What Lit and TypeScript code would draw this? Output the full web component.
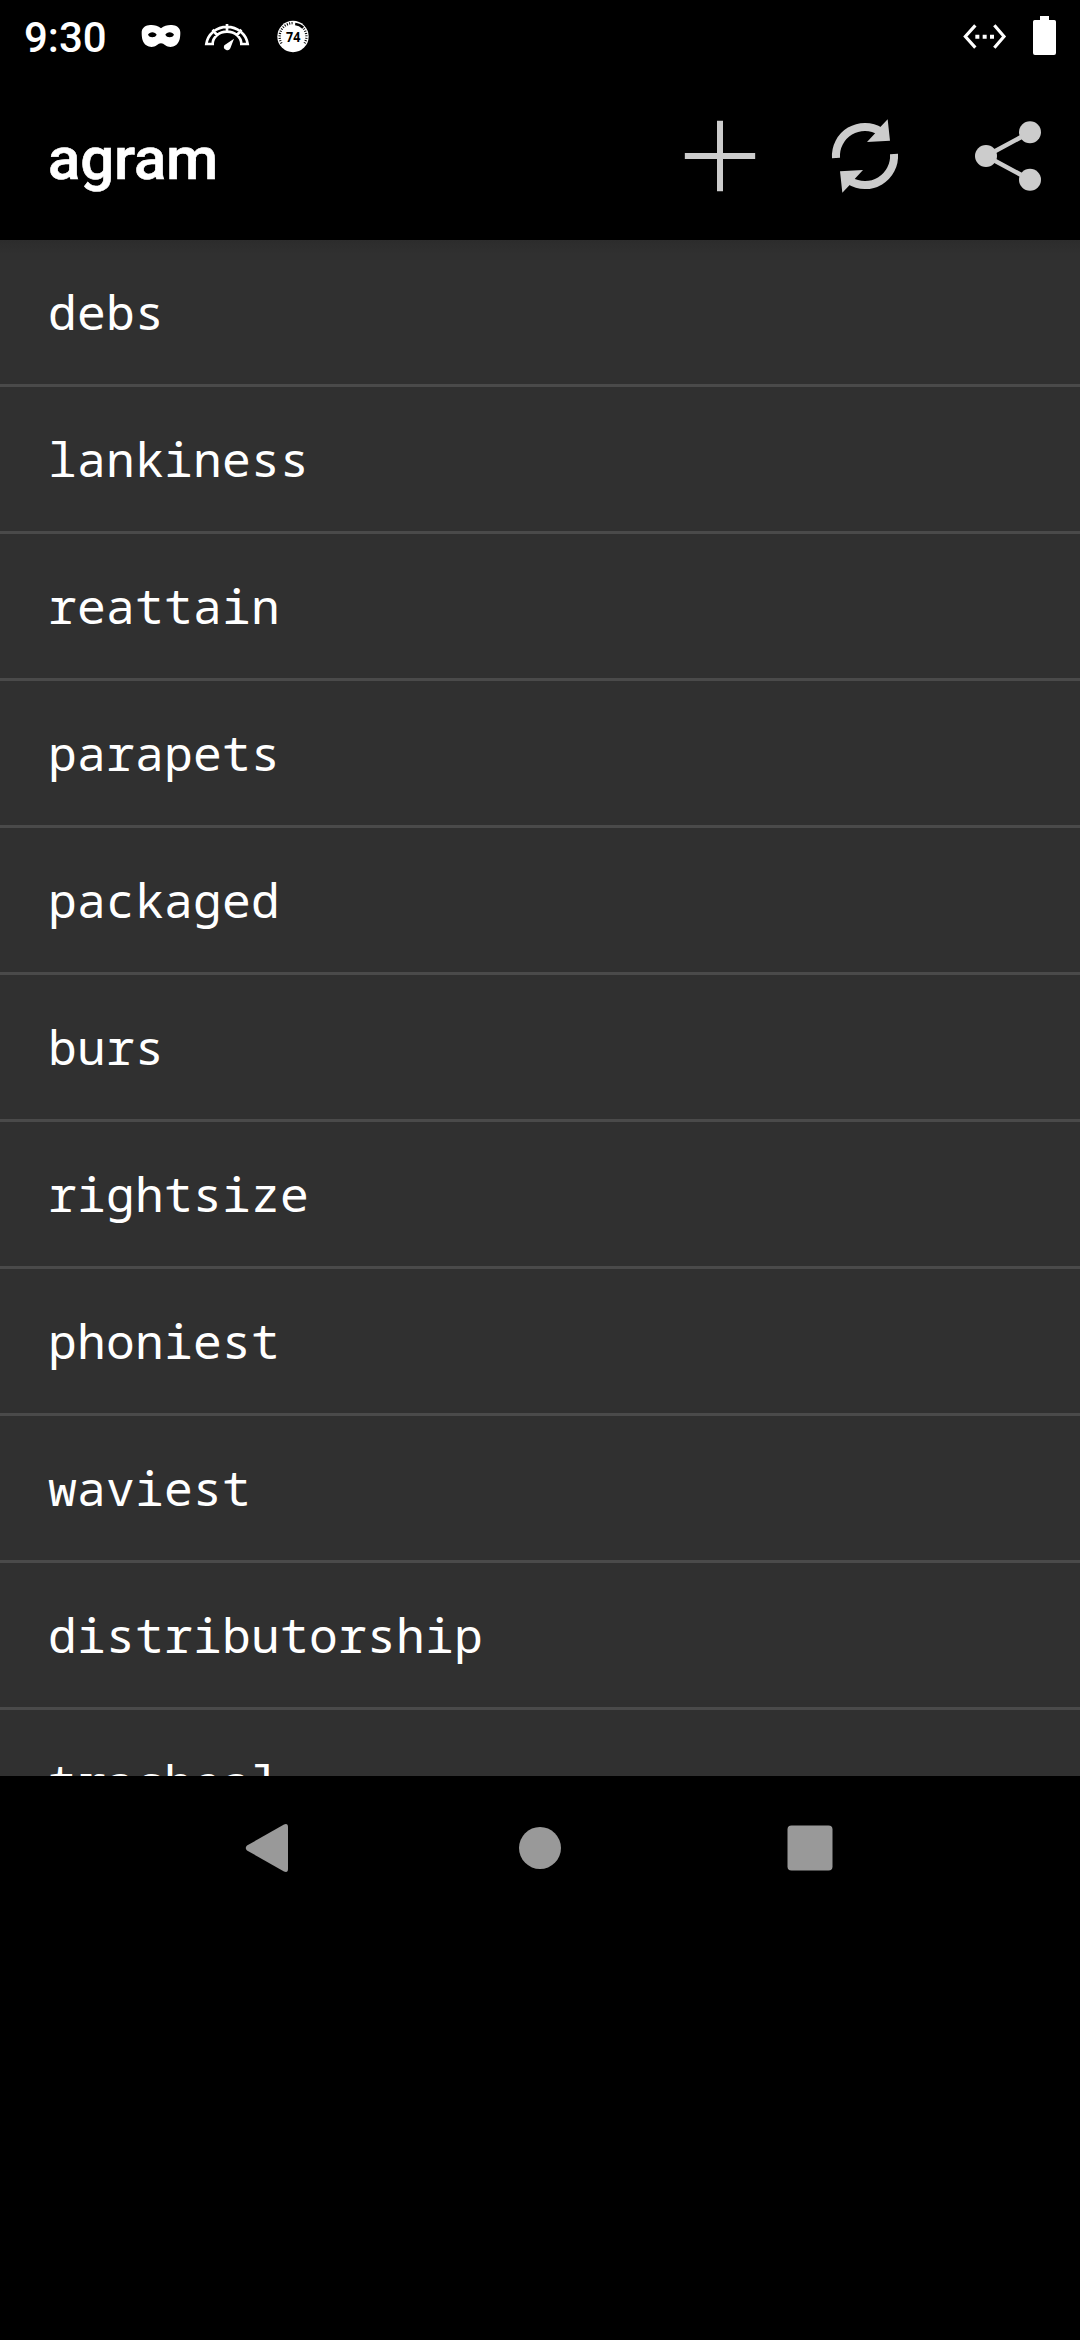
import { LitElement, html, css, svg } from "lit";
import { customElement } from "lit/decorators.js";

const WORDS = [
  "debs",
  "lankiness",
  "reattain",
  "parapets",
  "packaged",
  "burs",
  "rightsize",
  "phoniest",
  "waviest",
  "distributorship",
  "tracheal",
];

@customElement("status-bar")
export class StatusBar extends LitElement {
  static styles = css`
    :host {
      display: flex;
      align-items: center;
      height: 72px;
      box-sizing: border-box;
      padding: 0 18px 0 24px;
      background: #000;
      color: #fff;
      font-family: Roboto, sans-serif;
    }
    svg { display: block; height: 72px; flex: none; }
    .time { width: 113px; padding-top: 3px; font-size: 42px; font-weight: 500; line-height: 50px; }
    .notes { display: flex; gap: 18px; flex: 1; }
    .note { width: 48px; }
    .system { display: flex; gap: 15px; }
    .ethernet { width: 54px; }
    .battery { width: 36px; }
    .count { font: 700 42px "Open Sans", sans-serif; }
  `;
  render() {
    return html`
      <span class="time">9:30</span>
      <div class="notes">
        <svg class="note" viewBox="411 0 144 216">
          <path fill="#fff" fill-rule="evenodd" d="M483 85C494 76 508 74 520 76C533 78 541 86 541 98C541 117 537 129 527 136C517 143 504 142 496 136C491 132 488 130 483 130C478 130 475 132 470 136C462 142 449 143 439 136C429 129 425 117 425 98C425 86 433 78 446 76C458 74 472 76 483 85ZM444 104C448 94 466 94 470 104C466 114 448 114 444 104ZM496 104C500 94 518 94 522 104C518 114 500 114 496 104Z"/>
        </svg>
        <svg class="note" viewBox="609 0 144 216">
          <path fill="none" stroke="#fff" stroke-width="8" d="M619 132A62.500 59 0 0 1 743 132H724A43 37 0 0 0 638 132ZM681 72V96M638 89L652 107M724 89L710 107"/>
          <path fill="#fff" d="M702 116L691 145A10 10 0 1 1 673 136Z"/>
        </svg>
        <svg class="note" viewBox="808.5 0 144 216">
          <circle cx="880.5" cy="109.5" r="47" fill="#fff"/>
          <path fill="none" stroke="#000" stroke-width="7" stroke-dasharray="3 4.2" d="M846 130A40 40 0 0 1 880 69.500M913 86A40 40 0 0 1 915 130"/>
          <path fill="none" stroke="#000" stroke-width="8" d="M887 72A40 40 0 0 1 911 83"/>
          <text class="count" x="881" y="125" text-anchor="middle" textLength="43" lengthAdjust="spacingAndGlyphs">74</text>
        </svg>
      </div>
      <div class="system">
        <svg class="ethernet" viewBox="51 0 162 216">
          <path fill="none" stroke="#fff" stroke-width="9.500" d="M106 76L76 109.500L106 143M163 76L192 109.500L163 143"/>
          <path fill="#fff" d="M106 104h12v12h-12zM128 104h12v12h-12zM150 104h12v12h-12z"/>
        </svg>
        <svg class="battery" viewBox="258 0 108 216">
          <path fill="#fff" d="M300 48H327V60H343Q348 60 348 65V159Q348 165 342 165H285Q279 165 279 159V65Q279 60 284 60H300Z"/>
        </svg>
      </div>
    `;
  }
}

@customElement("action-bar")
export class ActionBar extends LitElement {
  static styles = css`
    :host {
      display: flex;
      align-items: center;
      height: 168px;
      background: #000;
      color: #fff;
    }
    .title {
      flex: 1;
      margin: 0;
      padding: 5px 0 0 48px;
      font: 500 60px/70px Roboto, sans-serif;
      letter-spacing: -0.2px;
      -webkit-text-stroke: 0.6px #fff;
    }
    svg { display: block; width: 144px; height: 144px; }
  `;
  render() {
    return html`
      <h1 class="title">agram</h1>
      <svg viewBox="-36 -48 432 432">
        <path fill="#ccc" d="M171 62.500H189V159H285.500V177H189V273.500H171V177H74.500V159H171Z"/>
      </svg>
      <svg viewBox="396 -48 432 432">
        ${["", "rotate(180 615 168)"].map(
          (turn) => svg`<g transform=${turn}>
            <path fill="none" stroke="#ccc" stroke-width="24" d="M528 174A87 87 0 0 1 661 94"/>
            <path fill="#ccc" d="M683 58L690 122L621 126L644 101L661 81Z"/>
          </g>`,
        )}
      </svg>
      <svg viewBox="828 -48 432 432">
        <path fill="none" stroke="#ccc" stroke-width="13.500" d="M1110 97L978 168L1110 239"/>
        <g fill="#ccc">
          <circle cx="978" cy="168" r="33"/>
          <circle cx="1110" cy="97" r="33"/>
          <circle cx="1110" cy="239" r="33"/>
        </g>
      </svg>
    `;
  }
}

@customElement("nav-bar")
export class NavBar extends LitElement {
  static styles = css`
    :host {
      display: grid;
      grid-template-columns: repeat(3, 270px);
      justify-content: center;
      align-items: center;
      height: 144px;
      background: #000;
    }
    svg { display: block; width: 270px; height: 60px; fill: #999; }
  `;
  render() {
    return html`
      <svg viewBox="135 0 270 60">
        <path d="M247 27.500L284 6.500Q288 5 288 9V51Q288 55 284 53.500L247 32.500Q244.500 30 247 27.500Z"/>
      </svg>
      <svg viewBox="405 0 270 60"><circle cx="540" cy="30" r="21"/></svg>
      <svg viewBox="675 0 270 60"><rect x="787.500" y="7.500" width="45" height="45" rx="4"/></svg>
    `;
  }
}

@customElement("app-root")
export class AppRoot extends LitElement {
  static styles = css`
    :host {
      display: flex;
      flex-direction: column;
      width: 1080px;
      height: 2340px;
      overflow: hidden;
      background: #000;
    }
    .words {
      height: 1536px;
      margin: 0;
      padding: 0;
      overflow: hidden;
      list-style: none;
      background: linear-gradient(#2c2c2c, #303030 14px);
      color: #fff;
      font: 48px/144px "Noto Sans Mono", "DejaVu Sans Mono", monospace;
      letter-spacing: 0.2px;
    }
    .word {
      height: 144px;
      padding-left: 48px;
      border-bottom: 3px solid #4a4a4a;
    }
  `;
  render() {
    return html`
      <status-bar></status-bar>
      <action-bar></action-bar>
      <ul class="words">
        ${WORDS.map((word) => html`<li class="word">${word}</li>`)}
      </ul>
      <nav-bar></nav-bar>
    `;
  }
}
